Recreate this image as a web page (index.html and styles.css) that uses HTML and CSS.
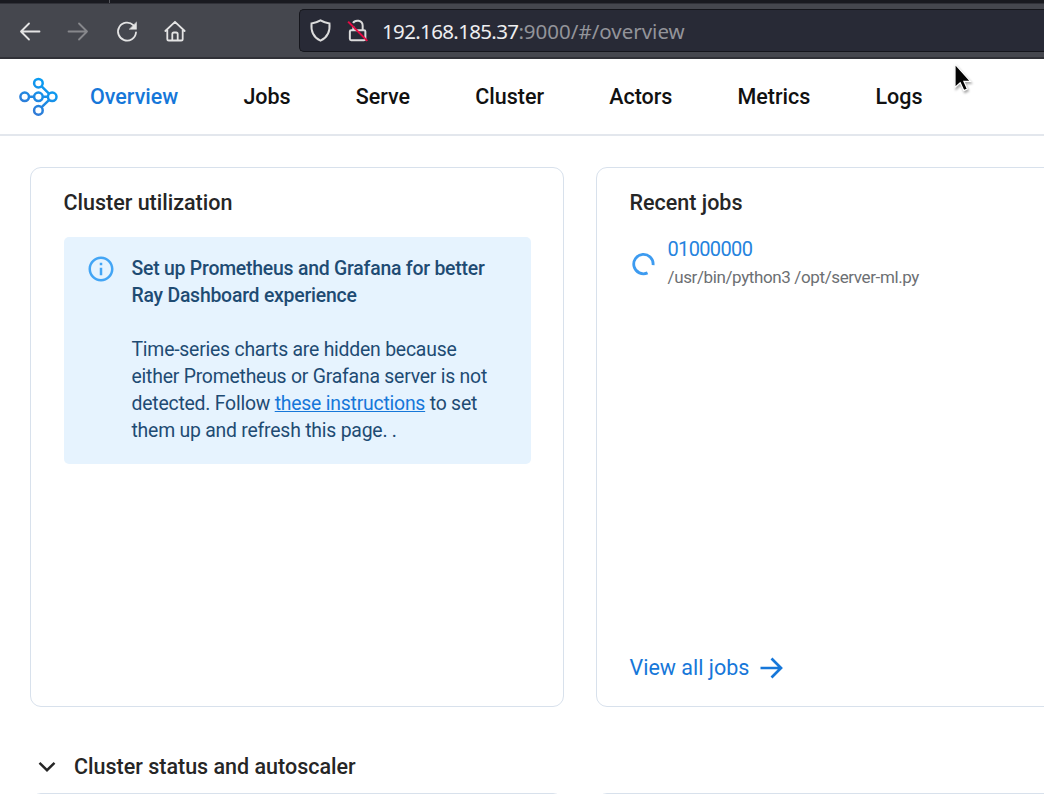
FILE: index.html
```html
<!DOCTYPE html>
<html lang="en">
<head>
<meta charset="utf-8">
<title>Overview</title>
<link rel="stylesheet" href="styles.css">
</head>
<body>
<div class="tabstrip"><span class="tab-edge"></span></div>
<div class="toolbar">
  <div class="buttons">
    <svg class="tool" viewBox="0 0 24 24"><path d="M21.500 12.500H3M11 4.500l-8 8 8 8"/></svg>
    <svg class="tool dim" viewBox="0 0 24 24"><path d="M2.500 12.500H21M13 4.500l8 8-8 8"/></svg>
    <svg class="tool" viewBox="0 0 24 24"><path d="M18.300 6.100A9 9 0 1 0 21 13.500"/><path class="solid" d="M21.500 3.300v7h-7z"/></svg>
    <svg class="tool" viewBox="0 0 24 24"><path d="M2.300 12L12 2.800l9.700 9.200M4.300 10.300v9.600q0 1.600 1.600 1.600h12.200q1.600 0 1.600-1.600v-9.600M9.300 21.300v-6.200q0-1.600 1.600-1.600h2.200q1.600 0 1.600 1.600v6.200"/></svg>
  </div>
  <div class="urlbar">
    <svg class="shield" viewBox="0 0 24 24"><path d="M12 2.200c3 1.800 5.500 2.500 8.600 3 .7 6.700-1.500 13.300-8.600 16.600C4.900 18.500 2.700 11.900 3.400 5.200 6.500 4.700 9 4 12 2.200z"/></svg>
    <svg class="lock" viewBox="0 0 24 24"><path d="M6.800 4.800C8.500 1.500 16 1.500 16 7.500V11.700M3.700 20V13q0-1.300 1.300-1.300h12.300q1.300 0 1.300 1.300v7q0 1.300-1.300 1.300H5q-1.300 0-1.300-1.300zM7 8v3.700"/><path class="slash" d="M2 3.500L20.500 22"/></svg>
    <span class="url"><span class="host">192.168.185.37</span>:9000/#/overview</span>
  </div>
</div>
<header class="nav">
  <svg class="logo" viewBox="0 0 40 40">
    <defs><linearGradient id="ray" gradientUnits="userSpaceOnUse" x1="10" y1="34" x2="28" y2="8"><stop offset="0" stop-color="#3279d5"/><stop offset="1" stop-color="#0a9cf2"/></linearGradient></defs>
    <g fill="none" stroke="url(#ray)" stroke-width="2.500"><circle cx="19.400" cy="6.200" r="4.300"/><circle cx="5.700" cy="19.800" r="4.300"/><circle cx="19.400" cy="19.800" r="4.300"/><circle cx="33.200" cy="19.800" r="4.300"/><circle cx="19.400" cy="33.400" r="4.300"/><path d="M9.900 19.810L15.200 19.800M23.600 19.810L29 19.800M22.400 9.200L30.200 16.800M22.400 30.400L30.200 22.800"/></g>
  </svg>
  <nav class="links"><a class="active">Overview</a><a>Jobs</a><a>Serve</a><a>Cluster</a><a>Actors</a><a>Metrics</a><a>Logs</a></nav>
  <svg class="cursor" viewBox="0 0 24 36"><path d="M4 3v23.500l5.200-4.700 3.600 7.800 3.600-1.600-3.500-7.700h6.600z"/></svg>
</header>
<main class="page">
  <div class="cards">
    <section class="card">
      <h2>Cluster utilization</h2>
      <div class="alert">
        <svg class="info" viewBox="0 0 24 24"><path d="M11 7h2v2h-2zm0 4h2v6h-2zm1-9C6.480 2 2 6.480 2 12s4.480 10 10 10 10-4.480 10-10S17.520 2 12 2zm0 18c-4.410 0-8-3.590-8-8s3.590-8 8-8 8 3.590 8 8-3.590 8-8 8z"/></svg>
        <div class="message">
          <strong>Set up Prometheus and Grafana for better<br>Ray Dashboard experience</strong>
          <p>Time-series charts are hidden because<br>either Prometheus or Grafana server is not<br>detected. Follow <a>these instructions</a> to set<br>them up and refresh this page. .</p>
        </div>
      </div>
    </section>
    <section class="card">
      <h2>Recent jobs</h2>
      <div class="job">
        <svg class="spinner" viewBox="0 0 24 24"><path d="M15.900 21A9.300 9.300 0 1 1 21.200 13.500"/></svg>
        <div class="job-text"><a class="job-id">01000000</a><span class="command">/usr/bin/python3 /opt/server-ml.py</span></div>
      </div>
      <a class="view-all">View all jobs <svg class="arrow" viewBox="0 0 24 24"><path d="M1.500 12H22M12.500 2.500L22 12l-9.500 9.500"/></svg></a>
    </section>
  </div>
  <div class="section-title"><svg class="chevron" viewBox="0 0 18 12"><path d="M1.500 1.800L9 9.200l7.500-7.400"/></svg><h2>Cluster status and autoscaler</h2></div>
  <div class="cards lower"><section class="card"></section><section class="card"></section></div>
</main>
</body>
</html>
```
FILE: styles.css
```css
* { box-sizing: border-box; }
body { margin: 0; height: 794px; overflow: hidden; background: #fff; font-family: Roboto, sans-serif; color: #262626; }
svg { display: block; flex: none; fill: none; }
h2, p { margin: 0; }
.tabstrip { height: 4px; background: #191a20; border-bottom: 1px solid #303138; }
.tab-edge { display: block; width: 1px; height: 3px; margin-left: 109px; background: #55565c; }
.toolbar { height: 55px; display: flex; align-items: center; background: #45474e; border-bottom: 2px solid #303137; overflow: hidden; }
.buttons { display: flex; gap: 24.400px; width: 299px; padding-left: 18px; flex: none; }
.tool { width: 24px; height: 24px; stroke: #e4e4e4; stroke-width: 1.800; stroke-linecap: round; stroke-linejoin: round; }
.tool.dim { stroke: #87888c; }
.solid { fill: #e4e4e4; stroke-width: .5; }
.urlbar { flex: 1; height: 43px; display: flex; align-items: center; background: #282a36; border: 1px solid #15161c; border-right: 0; border-radius: 5px 0 0 5px; padding-left: 8px; }
.shield, .lock { width: 25px; height: 25px; stroke: #dcdcdc; stroke-width: 1.900; }
.lock { margin-left: 13px; }
.lock .slash { stroke: #e50b43; }
.url { margin-left: 11px; font: 20.500px "Noto Sans", sans-serif; color: #93949a; white-space: nowrap; }
.host { color: #eeeef0; letter-spacing: -.65px; }
.nav { position: relative; height: 77px; display: flex; align-items: center; padding-left: 19px; border-bottom: 2px solid #e3e7ed; }
.logo { width: 40px; height: 40px; }
.links { display: flex; gap: 65.100px; margin: 1px 0 0 31px; font-size: 21.500px; font-weight: 500; line-height: 30px; color: #111; }
.links .active { color: #1677d9; }
.cursor { position: absolute; left: 951px; top: 2px; width: 24px; height: 36px; fill: #050505; stroke: #fff; stroke-width: 1.200; filter: drop-shadow(1px 2px 1px #0005); }
.page { padding: 31px 0 0 30px; height: 658px; overflow: hidden; }
.cards { display: flex; gap: 32px; overflow: hidden; }
.card { width: 534px; height: 540px; flex: none; display: flex; flex-direction: column; padding: 19px 32.500px 22px; border: 1.500px solid #d8e1ec; border-radius: 11px; }
h2 { font-size: 21.500px; font-weight: 500; line-height: 32px; white-space: nowrap; }
.alert { display: flex; margin-top: 18px; height: 227px; background: #e6f3fe; border-radius: 5px; padding: 18px 0 0 22px; color: #1e4b73; }
.info { width: 30px; height: 30px; margin-top: -1px; fill: #43a5f5; }
.message { margin-left: 16px; font-size: 19.400px; line-height: 27px; letter-spacing: -.22px; white-space: nowrap; }
.message strong { font-weight: 500; }
.message p { margin-top: 27px; }
.message a { color: #1677d9; text-decoration: underline; }
.job { display: flex; align-items: center; margin-top: 16px; }
.spinner { width: 25px; height: 25px; margin-left: 1px; stroke: #3d9bf0; stroke-width: 2.700; }
.job-text { display: flex; flex-direction: column; margin-left: 12px; }
.job-id { font-size: 20px; line-height: 28px; letter-spacing: -.65px; color: #2583de; }
.command { font-size: 17px; line-height: 28px; letter-spacing: -.38px; color: #6c6f73; white-space: nowrap; }
.view-all { display: flex; align-items: center; gap: 10px; margin-top: auto; font-size: 21.500px; line-height: 32px; color: #1677d9; }
.arrow { width: 24px; height: 24px; stroke: #1677d9; stroke-width: 2.700; }
.section-title { display: flex; align-items: center; gap: 18px; margin-top: 44px; padding-left: 8px; }
.chevron { width: 18px; height: 12px; stroke: #262626; stroke-width: 2.400; }
.lower { height: 17px; margin-top: 10px; }
```
